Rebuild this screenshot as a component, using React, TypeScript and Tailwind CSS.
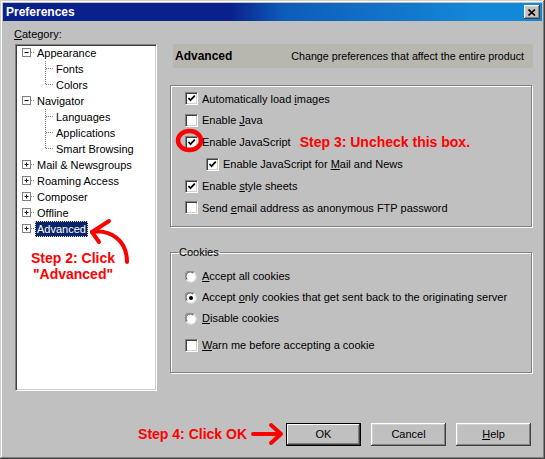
import React from "react";

const raised =
  "shadow-[inset_-1px_-1px_#404040,inset_1px_1px_#ffffff,inset_-2px_-2px_#808080,inset_2px_2px_#d4d0c8]";
const etched = "border border-[#808080] shadow-[inset_1px_1px_#ffffff,1px_1px_#ffffff]";

function U({ children }: { children: React.ReactNode }) {
  return <span className="underline underline-offset-[1px]">{children}</span>;
}

function Check({ checked }: { checked?: boolean }) {
  return (
    <span className="w-[13px] h-[13px] shrink-0 bg-white border border-[#808080] border-r-white border-b-white shadow-[inset_1px_1px_#404040,inset_-1px_-1px_#d4d0c8] flex items-center justify-center">
      {checked && (
        <svg width="9" height="9" viewBox="0 0 9 9">
          <path d="M1.5 4 L3.5 6.2 L7.8 1.6" fill="none" stroke="#000" strokeWidth="1.7" />
        </svg>
      )}
    </span>
  );
}

function Radio({ checked }: { checked?: boolean }) {
  return (
    <svg width="12" height="12" viewBox="0 0 12 12" className="shrink-0">
      <circle cx="6" cy="6" r="5.5" fill="#ffffff" />
      <path d="M1.2 9 A5.3 5.3 0 0 1 9 1.2" fill="none" stroke="#808080" strokeWidth="1" />
      <path d="M2.2 8.3 A4.3 4.3 0 0 1 8.3 2.2" fill="none" stroke="#404040" strokeWidth="1" />
      <path d="M9.8 3 A4.8 4.8 0 0 1 3 9.8" fill="none" stroke="#d4d0c8" strokeWidth="1" />
      {checked && <circle cx="6" cy="6" r="2" fill="#000" />}
    </svg>
  );
}

function Row({ children, className = "" }: { children: React.ReactNode; className?: string }) {
  return <div className={`flex items-center gap-[4px] h-[21.8px] ${className}`}>{children}</div>;
}

function RootItem({ label, open, selected }: { label: string; open?: boolean; selected?: boolean }) {
  return (
    <div className="flex items-center h-4">
      <svg width="18" height="16" viewBox="0 0 18 16" className="shrink-0">
        <rect x="5.5" y="3.5" width="8" height="8" fill="#fff" stroke="#808080" />
        <path d="M7.5 7.5 H11.5" stroke="#000" />
        {!open && <path d="M9.5 5.5 V9.5" stroke="#000" />}
        <path d="M14 7.5 H18" stroke="#808080" strokeDasharray="1 1" />
      </svg>
      <span
        className={`px-[1px] leading-[14px] border border-dotted ${
          selected ? "bg-[#0a246a] text-white border-[#e8e0a0]" : "border-transparent"
        }`}
      >
        {label}
      </span>
    </div>
  );
}

function ChildItem({ label, last }: { label: string; last?: boolean }) {
  return (
    <div className="flex items-center h-4">
      <svg width="39" height="16" viewBox="0 0 39 16" className="shrink-0">
        <path d={last ? "M28.5 0 V8" : "M28.5 0 V16"} stroke="#808080" strokeDasharray="1 1" />
        <path d="M29 7.5 H37" stroke="#808080" strokeDasharray="1 1" />
      </svg>
      <span className="leading-[14px]">{label}</span>
    </div>
  );
}

function Button({ children, def }: { children: React.ReactNode; def?: boolean }) {
  return (
    <div
      className={`w-[75px] h-[23px] flex items-center justify-center bg-[#c0c0c0] ${
        def ? "border border-black shadow-[inset_-1px_-1px_#404040,inset_1px_1px_#ffffff,inset_-2px_-2px_#808080]" : raised
      }`}
    >
      {children}
    </div>
  );
}

export default function App() {
  return (
    <div className="relative w-[545px] h-[459px] bg-[#c0c0c0] p-[3px] text-[11px] text-black font-['Liberation_Sans',Arial,sans-serif] shadow-[inset_-1px_-1px_#404040,inset_1px_1px_#d4d0c8,inset_-2px_-2px_#808080,inset_2px_2px_#ffffff] select-none">
      {/* Title bar */}
      <div className="h-[18px] flex items-center justify-between pl-[3px] pr-[2px] bg-[linear-gradient(to_right,#0a208c_42%,#0e5cb8_52%,#1488d8_88%)]">
        <span className="text-white font-bold text-[12px]">Preferences</span>
        <div className={`w-[16px] h-[14px] flex items-center justify-center bg-[#c0c0c0] ${raised}`}>
          <svg width="8" height="7" viewBox="0 0 8 7">
            <path d="M0.5 0.5 L7 6.5 M7 0.5 L0.5 6.5" stroke="#000" strokeWidth="1.6" />
          </svg>
        </div>
      </div>

      <div className="flex pl-[12px] gap-[13px]">
        {/* Category tree */}
        <div className="w-[142px] shrink-0">
          <div className="mt-[6px] -ml-px leading-[14px]">
            <U>C</U>ategory:
          </div>
          <div className="relative mt-[3px] h-[347px] bg-white border border-[#808080] border-r-white border-b-white shadow-[inset_1px_1px_#404040,inset_-1px_-1px_#d4d0c8] pl-[1px]">
            <RootItem label="Appearance" open />
            <ChildItem label="Fonts" />
            <ChildItem label="Colors" last />
            <RootItem label="Navigator" open />
            <ChildItem label="Languages" />
            <ChildItem label="Applications" />
            <ChildItem label="Smart Browsing" last />
            <RootItem label="Mail & Newsgroups" />
            <RootItem label="Roaming Access" />
            <RootItem label="Composer" />
            <RootItem label="Offline" />
            <RootItem label="Advanced" selected />
            <div className="mt-[13px] w-[112px] text-center text-[14px] leading-[16px] font-bold text-[#ff0000]">
              Step 2: Click
              <br />
              "Advanced"
            </div>
          </div>
        </div>

        {/* Advanced panel */}
        <div className="w-[362px] shrink-0 mt-[23px]">
          <div className="h-[24px] ml-[3px] -mr-[1px] bg-[#b7b7b0] flex items-center justify-between pl-[2px] pr-[9px]">
            <span className="font-bold text-[12px]">Advanced</span>
            <span className="text-[10.7px]">Change preferences that affect the entire product</span>
          </div>

          <div className={`mt-[17px] h-[142px] pl-[14px] pt-[2px] ${etched}`}>
            <Row>
              <Check checked />
              <span>
                Automatically load <U>i</U>mages
              </span>
            </Row>
            <Row>
              <Check />
              <span>
                Enable <U>J</U>ava
              </span>
            </Row>
            <Row>
              <span className="relative">
                <Check checked />
                <svg width="30" height="26" viewBox="0 0 30 26" className="absolute left-[-10px] top-[-6px] overflow-visible">
                  <ellipse cx="14.5" cy="10.5" rx="11.5" ry="9.5" fill="none" stroke="#ff0000" strokeWidth="4.5" />
                </svg>
              </span>
              <span>Enable JavaScript</span>
              <span className="ml-[5px] text-[14px] font-bold text-[#ff0000]">Step 3: Uncheck this box.</span>
            </Row>
            <Row className="ml-[21px]">
              <Check checked />
              <span>
                Enable JavaScript for <U>M</U>ail and News
              </span>
            </Row>
            <Row>
              <Check checked />
              <span>
                Enable <U>s</U>tyle sheets
              </span>
            </Row>
            <Row>
              <Check />
              <span>
                Send <U>e</U>mail address as anonymous FTP password
              </span>
            </Row>
          </div>

          <fieldset className={`mt-[19px] h-[127px] ${etched}`}>
            <legend className="ml-[7px] px-[1px] leading-[13px]">Cookies</legend>
            <div className="pt-[7px] pl-[14px]">
              <div className="flex items-center gap-[5px] h-[21px]">
                <Radio />
                <span>
                  <U>A</U>ccept all cookies
                </span>
              </div>
              <div className="flex items-center gap-[5px] h-[21px]">
                <Radio checked />
                <span>
                  Accept <U>o</U>nly cookies that get sent back to the originating server
                </span>
              </div>
              <div className="flex items-center gap-[5px] h-[21px]">
                <Radio />
                <span>
                  <U>D</U>isable cookies
                </span>
              </div>
              <div className="mt-[6px] flex items-center gap-[4px] h-[21px]">
                <Check />
                <span>
                  <U>W</U>arn me before accepting a cookie
                </span>
              </div>
            </div>
          </fieldset>
        </div>
      </div>

      {/* Buttons */}
      <div className="mt-[31px] flex items-center justify-end pr-[11px]">
        <span className="text-[14px] font-bold text-[#ff0000]">Step 4: Click OK</span>
        <svg width="34" height="24" viewBox="0 0 34 24" className="ml-[4px] mr-[1px]">
          <path d="M2 12 H29" stroke="#ff0000" strokeWidth="4" strokeLinecap="round" />
          <path d="M20 3 L30 12 L20 21" fill="none" stroke="#ff0000" strokeWidth="4" strokeLinecap="round" strokeLinejoin="round" />
        </svg>
        <div className="flex gap-[10px]">
          <Button def>OK</Button>
          <Button>Cancel</Button>
          <Button>
            <span>
              <U>H</U>elp
            </span>
          </Button>
        </div>
      </div>

      {/* Curved arrow for step 2 */}
      <svg width="50" height="55" viewBox="0 0 50 55" className="absolute left-[85px] top-[215px]">
        <path d="M7 17 C25 14 42 25 42 47" fill="none" stroke="#ff0000" strokeWidth="4" strokeLinecap="round" />
        <path d="M24 6 L7 17 L14 27" fill="none" stroke="#ff0000" strokeWidth="4" strokeLinecap="round" strokeLinejoin="round" />
      </svg>
    </div>
  );
}
